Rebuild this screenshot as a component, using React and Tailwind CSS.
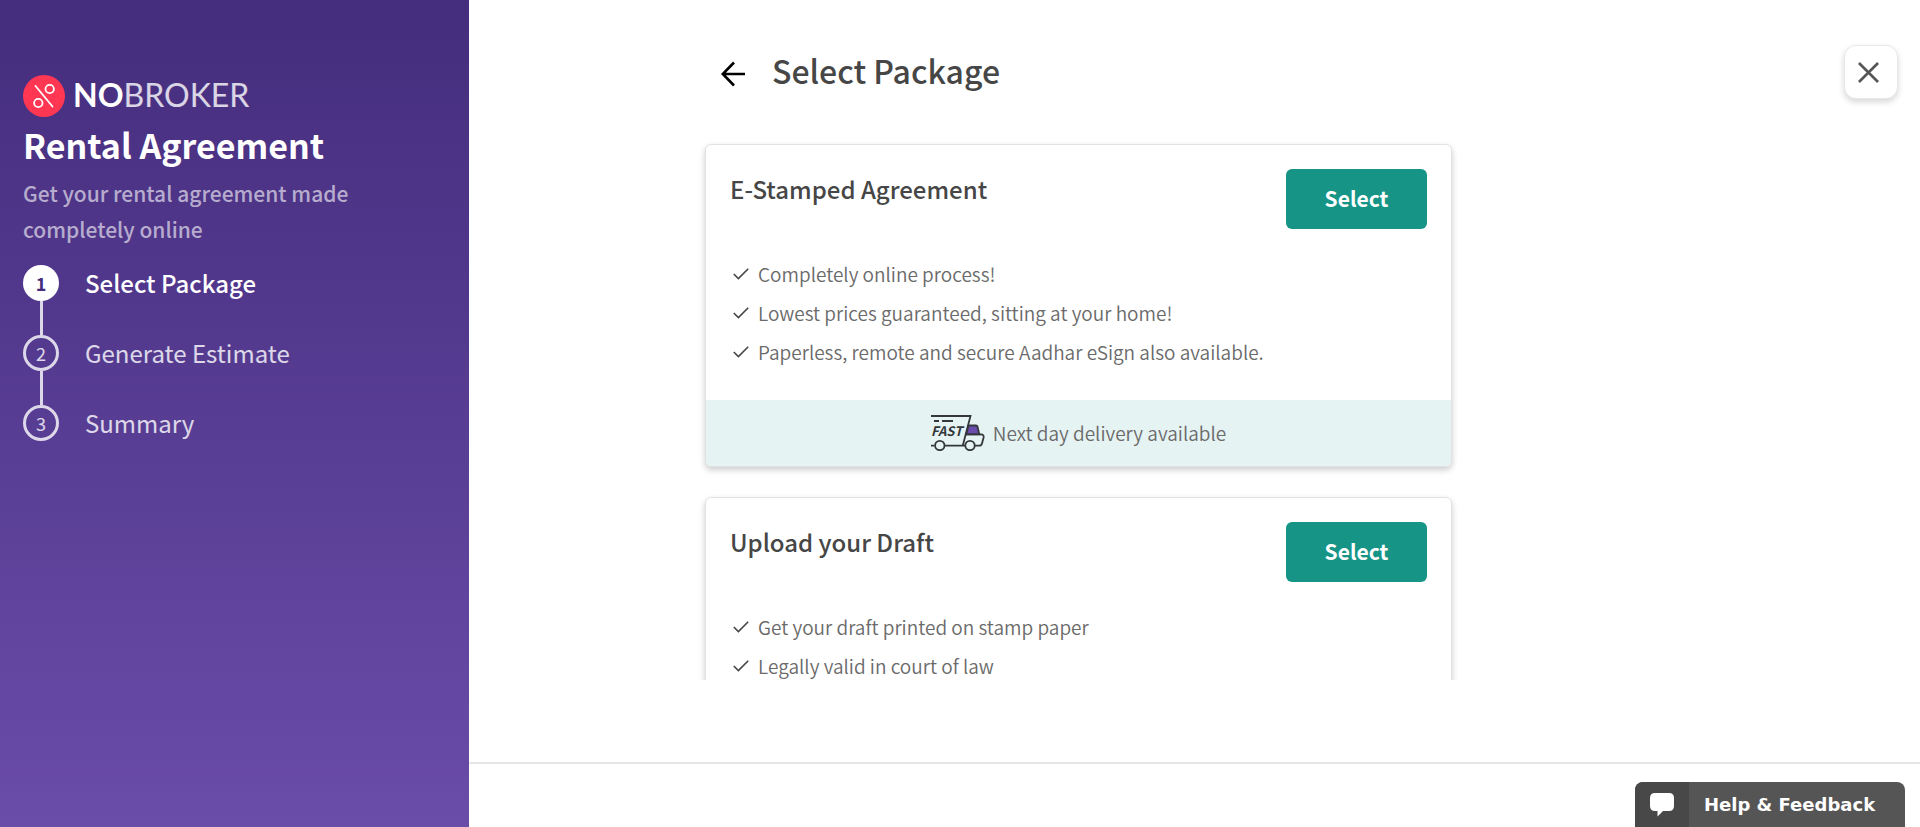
const steps = [
  { id: 1, label: "Select Package", active: true },
  { id: 2, label: "Generate Estimate", active: false },
  { id: 3, label: "Summary", active: false },
];

const packages = [
  {
    title: "E-Stamped Agreement",
    features: [
      "Completely online process!",
      "Lowest prices guaranteed, sitting at your home!",
      "Paperless, remote and secure Aadhar eSign also available.",
    ],
    note: "Next day delivery available",
  },
  {
    title: "Upload your Draft",
    features: ["Get your draft printed on stamp paper", "Legally valid in court of law"],
  },
];

function Logo() {
  return (
    <div className="flex items-start gap-2">
      <svg className="size-[42px]" viewBox="0 0 42 42" fill="none" aria-hidden="true">
        <circle cx="21" cy="21" r="21" fill="#ff3753" />
        <g stroke="#fff" strokeWidth="1.8" strokeLinecap="round">
          <path d="M12.5 11 29.5 31.5" />
          <circle cx="26.7" cy="14" r="4.2" />
          <circle cx="15.3" cy="28" r="4.2" />
        </g>
      </svg>
      <div className="font-[Lato,sans-serif] text-[32px] leading-10 text-white">
        <span className="font-bold">NO</span>
        <span className="font-normal text-white/80">BROKER</span>
      </div>
    </div>
  );
}

function Step({ step, last }) {
  return (
    <li className="flex gap-[26px]">
      <div className="flex flex-col items-center">
        <span
          className={
            step.active
              ? "flex size-9 items-center justify-center rounded-full bg-white text-lg font-bold text-[#452d7d]"
              : "flex size-9 items-center justify-center rounded-full border-3 border-white/80 text-lg text-white/80"
          }
        >
          {step.id}
        </span>
        {!last && <span className="h-[34px] w-[3px] bg-white/80" />}
      </div>
      <span
        className={
          step.active
            ? "text-2xl leading-9 font-medium text-white"
            : "text-2xl leading-9 text-white/80"
        }
      >
        {step.label}
      </span>
    </li>
  );
}

function Check() {
  return (
    <svg className="size-4" viewBox="0 0 16 16" fill="none" stroke="#464646" strokeWidth="1.6" aria-hidden="true">
      <path d="M.8 8 5.4 12.600 15.200 2.800" />
    </svg>
  );
}

function Truck() {
  return (
    <svg className="h-9 w-[54px]" viewBox="0 0 54 36" fill="none" stroke="#33373a" strokeWidth="1.8" aria-hidden="true">
      <path d="M0 1H39.5L31.8 30.5" />
      <path d="M3 6H8M11 6H22" />
      <path d="M37.500 10.500H45Q46.200 10.500 46.500 11.600L48.300 19.300H35.200Z" fill="#6a4cac" />
      <path d="M35 19.300H50Q53.200 19.500 52.600 22.500L51 28.500Q50.400 30.700 48 30.700H44M0 30.700H3.500M13.500 30.700H34" />
      <circle cx="8.8" cy="30.500" r="4.700" fill="#e6f2f2" />
      <circle cx="39" cy="30.500" r="4.700" fill="#e6f2f2" />
      <text x="0" y="21" fontSize="13" fontWeight="700" fontStyle="italic" fontFamily="Noto Sans CJK SC, sans-serif" fill="#33373a" stroke="none">
        FAST
      </text>
    </svg>
  );
}

function PackageCard({ item }) {
  return (
    <article className="overflow-hidden rounded-md border border-[#e2e2e2] bg-white shadow-[0_3px_6px_rgba(0,0,0,0.2)]">
      <div className="px-6 pt-6 pb-[29px]">
        <div className="flex items-start justify-between">
          <h2 className="text-2xl leading-10 font-medium text-[#464646]">{item.title}</h2>
          <button className="h-[60px] w-[141px] rounded-md bg-[#169587] text-[21px] font-bold text-white">
            Select
          </button>
        </div>
        <ul className="mt-[25px]">
          {item.features.map((f) => (
            <li key={f} className="flex items-center gap-[9px] pl-[3px] text-[19px] leading-[39px] font-[350] text-[#6a6a6a]">
              <Check />
              {f}
            </li>
          ))}
        </ul>
      </div>
      {item.note && (
        <div className="flex h-[66px] items-center justify-center gap-2 bg-[#e6f3f3] text-[19px] font-[350] text-[#6a6a6a]">
          <Truck />
          {item.note}
        </div>
      )}
    </article>
  );
}

export default function App() {
  return (
    <div className="flex h-screen bg-white font-['Noto_Sans_CJK_SC',sans-serif]">
      <aside className="w-[469px] shrink-0 bg-linear-to-b from-[#452d7d] to-[#6a4ca9] px-[23px] pt-[75px]">
        <Logo />
        <h1 className="mt-[7px] text-[34px] leading-[42px] font-bold text-white">Rental Agreement</h1>
        <p className="mt-[9px] w-[360px] text-[21px] leading-9 font-medium text-white/60">
          Get your rental agreement made completely online
        </p>
        <ol className="mt-[18px]">
          {steps.map((s, i) => (
            <Step key={s.id} step={s} last={i === steps.length - 1} />
          ))}
        </ol>
      </aside>

      <main className="flex min-w-0 flex-1 flex-col">
        <header className="flex items-start justify-between pt-[45px] pr-[22px] pl-[250px]">
          <div className="flex items-center gap-[25px]">
            <button aria-label="Back" className="mt-2">
              <svg className="size-[28px]" viewBox="0 0 28 28" fill="none" stroke="#000" strokeWidth="2.6" aria-hidden="true">
                <path d="M26 14H4M15 2.500 3.800 14 15 25.500" />
              </svg>
            </button>
            <h2 className="text-[32px] leading-[50px] font-medium text-[#464646]">Select Package</h2>
          </div>
          <button
            aria-label="Close"
            className="flex size-[54px] items-center justify-center rounded-xl border border-[#e8e8e8] bg-white pr-1.5 shadow-[0_3px_6px_rgba(0,0,0,0.16)]"
          >
            <svg className="size-[21px]" viewBox="0 0 22 22" fill="none" stroke="#555" strokeWidth="2.8" aria-hidden="true">
              <path d="M1 1 21 21M21 1 1 21" />
            </svg>
          </button>
        </header>

        <section className="mt-[37px] mb-[82px] flex min-h-0 flex-1 flex-col gap-[30px] overflow-y-auto pt-2 pr-2 pl-[236px] [scrollbar-width:none]">
          {packages.map((p) => (
            <div key={p.title} className="w-full max-w-[747px]">
              <PackageCard item={p} />
            </div>
          ))}
        </section>

        <footer className="flex h-[65px] shrink-0 items-end justify-end border-t-2 border-[#e6e6e6] pr-[15px]">
          <button className="flex h-[45px] w-[270px] overflow-hidden rounded-t-lg bg-[#555] font-['DejaVu_Sans',sans-serif] text-lg font-bold text-white">
            <span className="flex h-full w-[54px] items-center justify-center bg-[#484848]">
              <svg className="h-6 w-[26px]" viewBox="0 0 26 24" fill="#fff" aria-hidden="true">
                <path d="M6 0H20Q25 0 25 5V13Q25 18 20 18H14L8.500 23.500V18H6Q1 18 1 13V5Q1 0 6 0Z" />
              </svg>
            </span>
            <span className="pl-[15px] leading-[45px]">Help &amp; Feedback</span>
          </button>
        </footer>
      </main>
    </div>
  );
}
